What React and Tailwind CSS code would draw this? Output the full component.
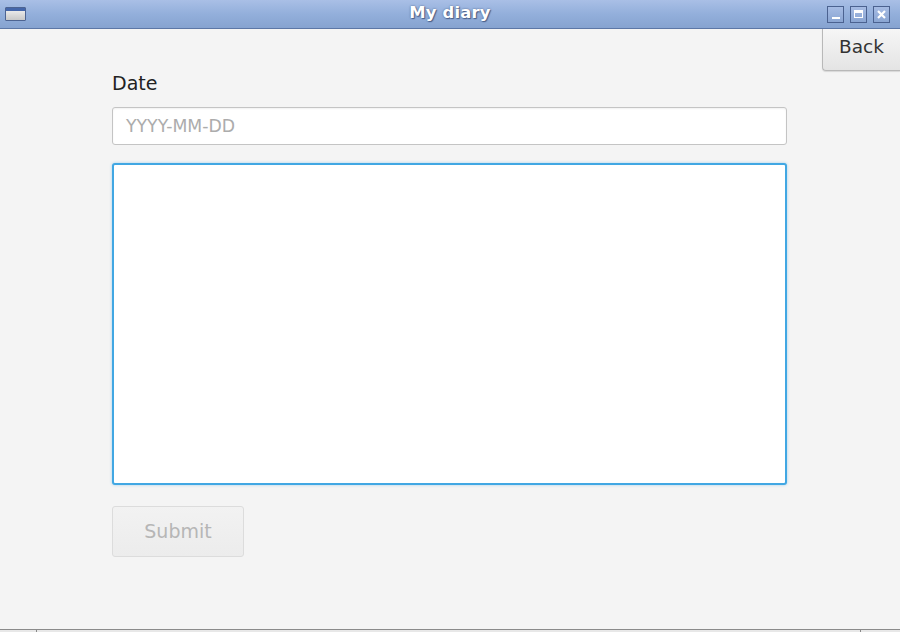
export default function App() {
  const font = { fontFamily: '"DejaVu Sans", Verdana, sans-serif' };
  return (
    <div className="w-[900px] h-[632px] flex flex-col bg-[#f4f4f4] overflow-hidden" style={font}>
      {/* Title bar */}
      <div className="h-[29px] shrink-0 flex items-center justify-between px-[5px] bg-gradient-to-b from-[#a9bfe6] via-[#93afdb] to-[#86a3d0] border-b border-[#5c77a6] relative">
        <div className="w-[21px] h-[14px] border border-[#4d6492] rounded-[1px] bg-gradient-to-b from-[#f4f4f4] to-[#c8c8c8] flex flex-col">
          <div className="h-[3px] bg-[#4466aa]"></div>
        </div>
        <div className="absolute left-0 right-0 top-0 h-[27px] flex items-center justify-center pointer-events-none">
          <span className="text-white font-bold text-[16.4px] tracking-[0.2px] [text-shadow:0_0_2px_#4a5f88,1px_1px_1px_#4a5f88]">My diary</span>
        </div>
        <div className="flex gap-[6px] mr-[5px]">
          <div className="w-[17px] h-[17px] border border-[#4b6290] bg-gradient-to-b from-[#a6bce4] to-[#8aa5d2] flex items-end justify-center pb-[3px]">
            <div className="w-[8px] h-[2px] bg-white"></div>
          </div>
          <div className="w-[17px] h-[17px] border border-[#4b6290] bg-gradient-to-b from-[#a6bce4] to-[#8aa5d2] flex items-center justify-center">
            <div className="w-[9px] h-[8px] border border-white border-t-[3px]"></div>
          </div>
          <div className="w-[17px] h-[17px] border border-[#4b6290] bg-gradient-to-b from-[#a6bce4] to-[#8aa5d2] flex items-center justify-center">
            <svg width="9" height="9" viewBox="0 0 9 9">
              <path d="M1 1L8 8M8 1L1 8" stroke="white" strokeWidth="2.2" />
            </svg>
          </div>
        </div>
      </div>

      {/* Content */}
      <div className="flex-1 flex flex-col relative">
        <div className="flex justify-end">
          <button className="w-[78px] h-[42px] rounded-bl-[4px] border border-[#b8b8b8] border-t-0 border-r-0 bg-gradient-to-b from-[#f6f6f6] to-[#e4e4e4] text-[#333] text-[18.5px] leading-[34px] pb-[6px] shadow-[0_1px_1px_rgba(0,0,0,0.12)]">
            Back
          </button>
        </div>
        <div className="pl-[112px] w-[787px] flex flex-col">
          <div className="text-[19px] text-[#222] leading-[24px] h-[24px]">Date</div>
          <div className="mt-[12px] h-[38px] rounded-[3px] border border-[#c4c4c4] bg-white flex items-center pl-[13px] pt-[2px] text-[17.3px] text-[#acacac] shadow-[inset_0_1px_2px_rgba(0,0,0,0.06)]">
            YYYY-MM-DD
          </div>
          <div className="mt-[18px] h-[322px] rounded-[3px] border-2 border-[#41a7e3] bg-white shadow-[0_0_3px_rgba(65,167,227,0.45)]"></div>
          <div className="mt-[21px] w-[132px] h-[51px] rounded-[3px] border border-[#dcdcdc] bg-gradient-to-b from-[#f2f2f2] to-[#ececec] flex items-center justify-center text-[19px] text-[#b6b6b6]">
            Submit
          </div>
        </div>
      </div>

      {/* Bottom strip */}
      <div className="h-[3px] shrink-0 border-t border-[#8a8a8a] bg-[#e8e8e8] flex">
        <div className="w-[37px] border-r border-[#888]"></div>
        <div className="w-[824px] border-r border-[#888]"></div>
      </div>
    </div>
  );
}
